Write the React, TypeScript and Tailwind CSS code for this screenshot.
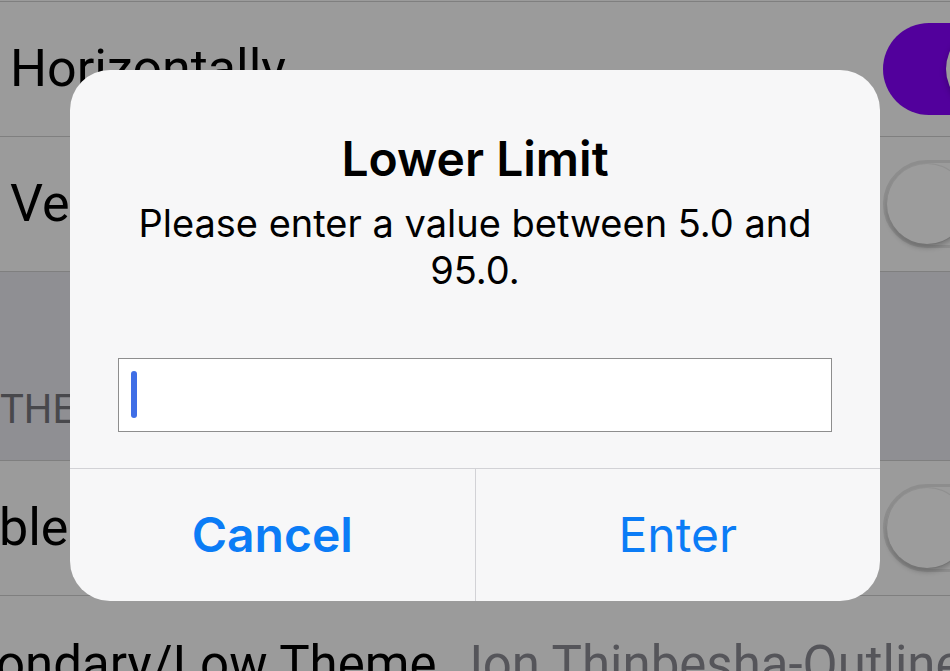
import React from 'react';

const rowFont = { fontFamily: 'Roboto, "Noto Sans", sans-serif' };
const sfFont = { fontFamily: 'Inter, "Noto Sans", sans-serif' };

function Toggle({ on }: { on?: boolean }) {
  if (on) {
    return (
      <div className="relative h-[92px] w-[151px] shrink-0 rounded-full bg-[#52009c]">
        <div className="absolute right-[4px] top-[4px] h-[84px] w-[84px] rounded-full bg-[#9c9c9c] shadow-[0_3px_6px_rgba(0,0,0,0.25)]" />
      </div>
    );
  }
  return (
    <div className="relative h-[88px] w-[151px] shrink-0 rounded-full border-[3px] border-[#8d8d8d] bg-[#9b9b9b]">
      <div className="absolute left-[1px] top-[1px] h-[80px] w-[80px] rounded-full bg-[#9c9c9c] shadow-[0_4px_5px_rgba(0,0,0,0.22),0_0_0_1px_rgba(0,0,0,0.06)]" />
    </div>
  );
}

function Row({ children, toggle }: { children: React.ReactNode; toggle?: 'on' | 'off' }) {
  return (
    <div className="flex h-[135px] items-center justify-between overflow-hidden border-b border-[#7f7f7f] bg-[#9b9b9b]">
      <div className="whitespace-nowrap text-[52px] leading-none text-black" style={rowFont}>
        {children}
      </div>
      {toggle && (
        <div className="mr-[-84px] pl-4">
          <Toggle on={toggle === 'on'} />
        </div>
      )}
    </div>
  );
}

export default function App() {
  return (
    <div className="relative h-[671px] w-[950px] overflow-hidden bg-[#9b9b9b]">
      <div className="flex flex-col">
        <div className="h-[2px] border-b border-[#7f7f7f]" />
        <Row toggle="on">
          <span className="ml-[10px]">Horizontally</span>
        </Row>
        <Row toggle="off">
          <span className="ml-[10px]">Vertically</span>
        </Row>
        <div className="flex h-[189px] items-end overflow-hidden border-b border-[#7f7f7f] bg-[#8f8f93] pb-[30px]">
          <span className="whitespace-nowrap text-[40px] leading-none text-[#48484c]" style={rowFont}>
            THEME
          </span>
        </div>
        <Row toggle="off">
          <span className="ml-[-1px]">ble</span>
        </Row>
        <div className="flex h-[134px] items-center overflow-hidden bg-[#9b9b9b] pt-[2px]">
          <div className="ml-[-4px] whitespace-nowrap text-[51px] leading-none" style={rowFont}>
            <span className="text-black">ondary/Low Theme</span>
            <span className="ml-[18px] text-[#55555a]">Jon Thinbesha-Outline</span>
          </div>
        </div>
      </div>

      <div
        className="absolute left-[70px] top-[70px] flex w-[810px] flex-col overflow-hidden rounded-[40px] bg-[#f7f7f8]"
        style={sfFont}
      >
        <div className="px-[50px] pt-[60px] text-center text-[48px] font-semibold leading-[58px] text-black">
          Lower Limit
        </div>
        <div className="mt-[12px] px-[60px] text-center text-[38px] leading-[47px] text-black">
          Please enter a value between 5.0 and 95.0.
        </div>
        <div className="relative mx-[48px] mt-[64px] h-[74px] border border-[#8e8e8e] bg-white">
          <div className="absolute left-[12px] top-[12px] h-[47px] w-[6px] rounded-full bg-[#3f6ee6]" />
        </div>
        <div className="mt-[36px] flex h-[133px] border-t border-[#d2d2d6]">
          <div className="flex flex-1 items-center justify-center border-r border-[#d2d2d6] text-[48px] font-semibold text-[#0b7cf6]">
            Cancel
          </div>
          <div className="flex flex-1 items-center justify-center text-[48px] text-[#0b7cf6]">
            Enter
          </div>
        </div>
      </div>
    </div>
  );
}
